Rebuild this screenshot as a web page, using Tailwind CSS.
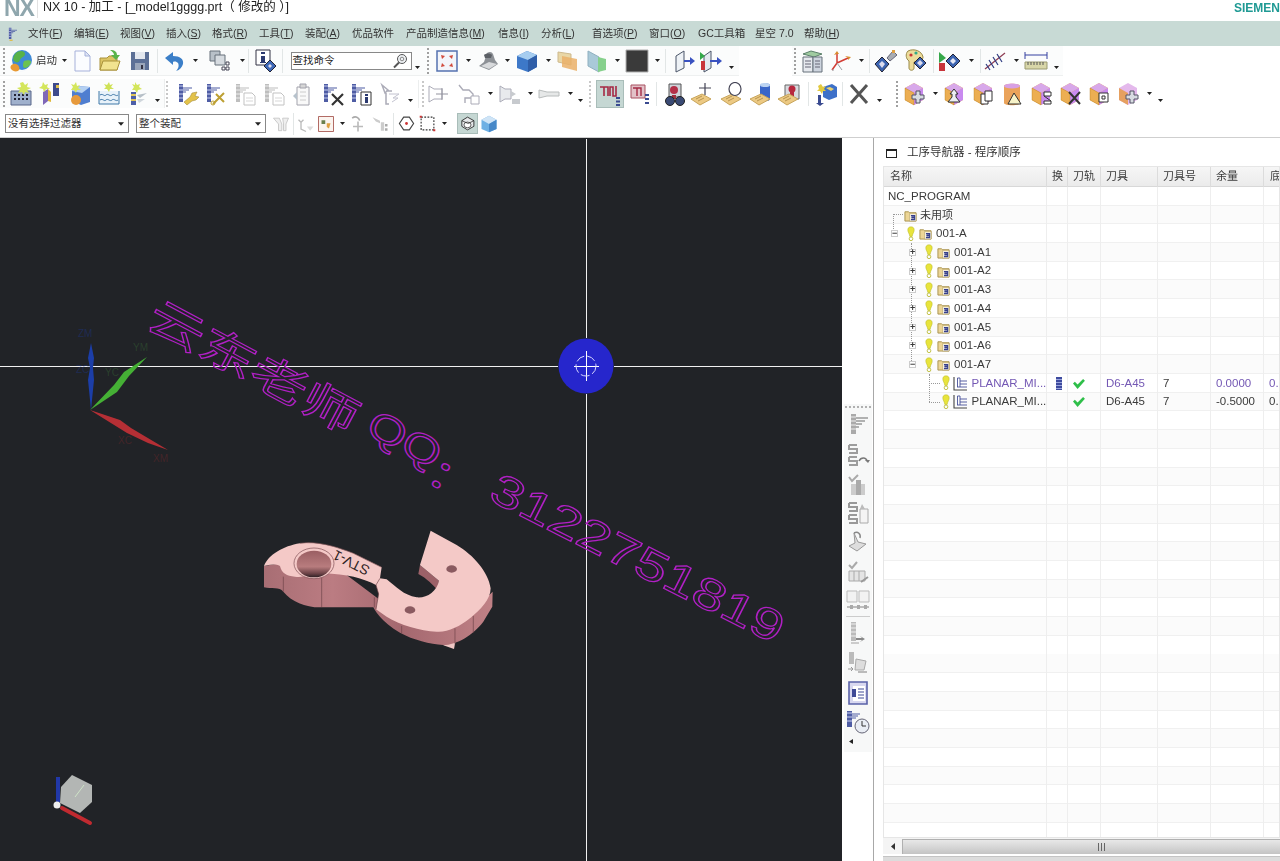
<!DOCTYPE html>
<html lang="zh-CN">

<head>
    <meta charset="UTF-8">
    <title>NX 10 - 加工</title>
    <script src="https://cdn.jsdelivr.net/npm/@tailwindcss/browser@4"></script>
</head>

<body class="bg-white">
    <!-- icon sprite -->
    <svg class="absolute w-0 h-0">
        <symbol id="ar" viewBox="0 0 5 3"><path d="M0 0h5L2.5 3z" fill="#222"/></symbol>
        <symbol id="globe" viewBox="0 0 24 24"><circle cx="13" cy="11" r="10" fill="#3e8ad6"/><path d="M8 3c4-2 8-1 8 2s-4 3-5 6-4 3-6 1 0-7 3-9z" fill="#58b248"/><path d="M15 12c3-1 7-1 7 1s-3 6-6 6-2-5-1-7z" fill="#6cc24f"/><path d="M2 20c-2-3 2-6 5-5s4 4 3 6-6 2-8-1z" fill="#e89a34"/><path d="M8 22c6 1 12-2 14-8-1 6-7 10-14 8z" fill="#f3f6fb"/></symbol>
        <symbol id="doc" viewBox="0 0 24 24"><path d="M5 2h10l5 5v15H5z" fill="#fbfcff" stroke="#a6b1da"/><path d="M15 2v5h5z" fill="#dfe5f5" stroke="#a6b1da"/></symbol>
        <symbol id="folder" viewBox="0 0 24 24"><path d="M2 9h7l2-2h8v14H2z" fill="#dcc463" stroke="#a9923b"/><path d="M2 21l3-9h17l-3 9z" fill="#f2e38f" stroke="#a9923b"/><path d="M12 1c5 0 7 2 7 5h3l-4 5-5-5h3c0-2-2-4-4-5z" fill="#59b449"/></symbol>
        <symbol id="floppy" viewBox="0 0 24 24"><path d="M3 3h18v18H3z" fill="#5c7096"/><path d="M7 3h10v7H7z" fill="#e4e8ef"/><path d="M7 14h10v7H7z" fill="#9aa6ba"/><path d="M13 16h2v4h-2z" fill="#334"/></symbol>
        <symbol id="undo" viewBox="0 0 24 24"><path d="M3 9l8-6v4c7 0 11 3 10 8-1 3-3 6-7 7 3-3 3-6 2-8-1-1-3-2-5-1v3z" fill="#3c7fc8"/></symbol>
        <symbol id="wins" viewBox="0 0 24 24"><path d="M2 2h10v10H2z" fill="#b8c0c8" stroke="#66707a"/><path d="M7 6h10v10H7z" fill="#d6dbe0" stroke="#66707a"/><path d="M18 13h3v3h-3zM18 18h3v3h-3zM14 18h3v3h-3z" fill="#fff" stroke="#445"/></symbol>
        <symbol id="info" viewBox="0 0 24 24"><path d="M3 1h14v15H3z" fill="#fff" stroke="#334"/><path d="M8 3h4v2H8zM8 7h4v6h1v1H7v-1h1z" fill="#2c3a70"/><path d="M17 11l6 6-6 6-6-6z" fill="#3e68b8" stroke="#223"/><path d="M17 15l2 2-2 2-2-2z" fill="#dde"/></symbol>
        <symbol id="fit" viewBox="0 0 24 24"><path d="M2 2h20v20H2z" fill="#f3f5fa" stroke="#5572b0" stroke-width="1.5"/><path d="M6 6l4 1-3 3zM18 6l-1 4-3-3zM6 18l1-4 3 3zM18 18l-4-1 3-3z" fill="#d14b3d"/></symbol>
        <symbol id="shade" viewBox="0 0 24 24"><path d="M3 17l5-4 3-9c3-2 5-1 6 1l2 6 3 4-9 6z" fill="#8d9196"/><path d="M5 17l8-4 8 2-8 5z" fill="#d8dadc"/><path d="M8 6c2-2 6-2 8 0l-1 3H9z" fill="#5c6066"/></symbol>
        <symbol id="cube" viewBox="0 0 24 24"><path d="M12 2l10 4v12l-9 5-11-4V7z" fill="#3d78c8"/><path d="M2 7l11 4 9-5-10-4z" fill="#a6cdf0"/><path d="M13 11v12l9-5V6z" fill="#2f5ea8"/></symbol>
        <symbol id="orng" viewBox="0 0 24 24"><path d="M3 3l13 2v11L3 13z" fill="#e9d7a6" stroke="#cdb98d"/><path d="M7 7l15 3v12L7 18z" fill="#eab068" fill-opacity=".85"/></symbol>
        <symbol id="grnp" viewBox="0 0 24 24"><path d="M3 2l11 6v15L3 17z" fill="#a9c9d8" stroke="#8fb0c0"/><path d="M13 8l8 2v11l-8 2z" fill="#86d08c"/></symbol>
        <symbol id="blk" viewBox="0 0 24 24"><path d="M1 1h22v22H1z" fill="#3a3a3a" stroke="#b0b0b0"/></symbol>
        <symbol id="planeA" viewBox="0 0 24 24"><path d="M4 7l8-5v17l-8 4z" fill="#eef2f6" stroke="#4a5568"/><path d="M12 11h6V8l5 4-5 4v-3h-6z" fill="#3a52c0"/></symbol>
        <symbol id="planeB" viewBox="0 0 24 24"><path d="M5 7l7-5v17l-7 4z" fill="#e3e9f0" stroke="#4a5568"/><path d="M1 3l5 4-5 4z" fill="#33a84a"/><path d="M2 12h4v9H2z" fill="#c8343a"/><path d="M11 11h7V8l5 4-5 4v-3h-7z" fill="#3a52c0"/></symbol>
        <symbol id="stack" viewBox="0 0 24 24"><path d="M3 5l8-3 11 3-8 3z" fill="#9fcba0" stroke="#5a7f6a"/><path d="M3 8h10v15H3z" fill="#e6e9ee" stroke="#66707a"/><path d="M13 8h9v15h-9z" fill="#cdd4de" stroke="#66707a"/><path d="M5 12h6M5 15h6M5 18h6M15 12h5M15 15h5M15 18h5" stroke="#667"/></symbol>
        <symbol id="csys" viewBox="0 0 24 24"><path d="M8 14V5M8 14l11-5M8 14l-5 7" stroke="#d23c34" stroke-width="1.5" fill="none"/><path d="M8 5l-3 1 3-4 2 3zM19 9l-3-2 6 1-3 3z" fill="#d88a2c"/><path d="M8 14l5 7M3 21h2" stroke="#9aa0a6" fill="none"/></symbol>
        <symbol id="wrdia" viewBox="0 0 24 24"><path d="M13 9l6-7 4 4-7 6z" fill="#a8acb2" stroke="#667"/><path d="M18 1h3v3h-3z" fill="#e0a040"/><path d="M8 8l7 7-7 8-7-8z" fill="#3c64b0" stroke="#223"/><path d="M8 12l3 3-3 4-3-4z" fill="#dde"/></symbol>
        <symbol id="pal" viewBox="0 0 24 24"><path d="M5 2c6-3 14 0 15 6 0 3-3 4-6 4l-3 1v6c0 3-5 3-5 0v-7C3 10 2 5 5 2z" fill="#eddc9a" stroke="#9a8a4a"/><circle cx="8" cy="6" r="1.6" fill="#c33"/><circle cx="13" cy="4" r="1.6" fill="#3a8"/><path d="M17 8l6 6-6 6-6-6z" fill="#3c64b0" stroke="#223"/><path d="M17 11l3 3-3 3-3-3z" fill="#dde"/></symbol>
        <symbol id="gdia" viewBox="0 0 24 24"><path d="M2 3l7 6-7 5z" fill="#36a84a"/><path d="M2 14h6v8H2z" fill="#c8343a"/><path d="M16 5l7 7-7 7-7-7z" fill="#3c64b0" stroke="#223"/><path d="M16 9l3 3-3 3-3-3z" fill="#e6e8f4"/></symbol>
        <symbol id="ant" viewBox="0 0 24 24"><path d="M2 20L22 4" stroke="#8c3b52" stroke-width="1.3"/><path d="M6 11l5 8M10 8l5 8M14 5l5 8M3 15l4 6" stroke="#2f3c82" stroke-width="1.2"/></symbol>
        <symbol id="rul" viewBox="0 0 24 24"><path d="M1 6h22M1 3v7M23 3v7" stroke="#3440a0"/><path d="M1 13h22v7H1z" fill="#d8d6a8" stroke="#9a9a70"/><path d="M4 13v3M7 13v3M10 13v3M13 13v3M16 13v3M19 13v3" stroke="#555"/></symbol>
        <symbol id="gridstar" viewBox="0 0 24 24"><path d="M2 9h20v14H2z" fill="#9fb0cc" stroke="#58668a"/><path d="M5 12h2v2H5zM9 12h2v2H9zM13 12h2v2h-2zM17 12h2v2h-2zM5 16h2v2H5zM9 16h2v2H9zM13 16h2v2h-2zM17 16h2v2h-2z" fill="#223"/><path d="M14 0l2 3 3-2-1 4 4 1-4 2 2 3-4-1-1 3-2-3-4 1 2-3-3-2 4-1-1-4z" fill="#d4e65c"/></symbol>
        <symbol id="tool" viewBox="0 0 24 24"><path d="M5 10l5-3v12l-5 4z" fill="#7f67b8"/><path d="M10 7l3 3v10l-3-1z" fill="#e0b93c"/><path d="M15 1h6v13h-6z" fill="#3e4a8c"/><path d="M18 3h3v3h-3z" fill="#e0c050"/><path d="M5 0l2 3 3-1-1 3 3 2-4 0-2 3-1-3-4-1 3-2z" fill="#d4e65c"/></symbol>
        <symbol id="cubeo" viewBox="0 0 24 24"><path d="M9 4l13 1v15l-9 3-9-4V9z" fill="#4f7ed0"/><path d="M4 9l10 2 8-6-13-1z" fill="#b4d0f2"/><circle cx="8" cy="18" r="5" fill="#e79a3c"/><path d="M8 0l1 4 3-1-2 3 3 2-4 0-1 3-2-3-3 0 2-3-2-3 3 1z" fill="#d4e65c"/></symbol>
        <symbol id="water" viewBox="0 0 24 24"><path d="M2 9v13h20V9" fill="#e8f2fa" stroke="#3f78a8"/><path d="M3 13c3-2 4 2 6 0s4 2 6 0 4 2 6 0M3 18c3-2 4 2 6 0s4 2 6 0 4 2 6 0" stroke="#3f78a8" fill="none"/><path d="M12 0l1 3 3-1-2 3 3 2-4 0-1 3-2-3-3 0 2-2-2-3 3 1z" fill="#cfe257"/></symbol>
        <symbol id="mill" viewBox="0 0 24 24"><path d="M6 10h5v13H6z" fill="#4d5fa8"/><path d="M6 12h5v2H6zM6 17h5v2H6z" fill="#e0c65a"/><path d="M12 13l10-2-7 5z" fill="#b7c0c8"/><path d="M12 17l8 0-6 4z" fill="#d0d6dc"/><path d="M10 0l2 3 3-1-1 3 3 2-4 1-1 3-2-3-3 0 2-3-2-3 3 1z" fill="#d4e65c"/></symbol>
        <symbol id="steps" viewBox="0 0 24 24"><path d="M3 2h4v18H3z" fill="#4e5ca4"/><path d="M3 4h4M3 8h4M3 12h4M3 16h4" stroke="#c8cff0"/><path d="M7 6h9M7 8h6M7 10h3" stroke="#4e5ca4" stroke-width="1.2"/></symbol>
        <symbol id="opw" viewBox="0 0 24 24"><use href="#steps"/><path d="M8 20l6-5 2-4 5-1-2 4 4 1-3 3-4 1-5 4z" fill="#e3c24a" stroke="#9a8230" stroke-width=".5"/></symbol>
        <symbol id="ops" viewBox="0 0 24 24"><use href="#steps"/><path d="M9 22l11-11M12 12l8 8" stroke="#bda033" stroke-width="2"/><circle cx="9" cy="21" r="2" fill="none" stroke="#bda033"/></symbol>
        <symbol id="opd" viewBox="0 0 24 24"><use href="#steps"/><path d="M11 11h8l3 3v9H11z" fill="#fff" stroke="#667"/><path d="M13 16h7M13 19h7" stroke="#999"/></symbol>
        <symbol id="opc" viewBox="0 0 24 24"><path d="M6 5h12v18H6z" fill="#f5f5f5" stroke="#667"/><path d="M9 2h6v4H9z" fill="#bbb" stroke="#667"/><path d="M9 10h6M9 14h6M9 18h6" stroke="#aaa"/><path d="M2 14l4-4v8z" fill="#89a"/></symbol>
        <symbol id="opx" viewBox="0 0 24 24"><use href="#steps"/><path d="M11 12l11 11M22 12L11 23" stroke="#333" stroke-width="2.2"/></symbol>
        <symbol id="opi" viewBox="0 0 24 24"><use href="#steps"/><path d="M12 10h10v13H12z" fill="#fff" stroke="#333"/><path d="M16 12h3v2h-3zM16 15h3v6h-3z" fill="#2c3a70"/></symbol>
        <symbol id="opg" viewBox="0 0 24 24"><path d="M4 3l6 5-3 3zM8 9h6M8 11v11h3" stroke="#889" fill="none" stroke-width="1.5"/><path d="M11 12h10l-6 4h5l-6 4" stroke="#aab" fill="none"/></symbol>
        <symbol id="path1" viewBox="0 0 24 24"><path d="M2 4l5 3h8v10H7l-5 3z" fill="#fff" stroke="#889"/><path d="M15 6v12M9 12h12" stroke="#667"/></symbol>
        <symbol id="path2" viewBox="0 0 24 24"><path d="M2 3l4 5h6l4 4v4H8v5" fill="none" stroke="#889" stroke-width="1.4"/><path d="M14 14h8v8h-8z" fill="#fff" stroke="#889"/></symbol>
        <symbol id="path3" viewBox="0 0 24 24"><path d="M2 4l5 3h6v10H7l-5 3z" fill="#dfe2e6" stroke="#889"/><path d="M13 9l5 3-5 3zM14 17h8v5h-8z" fill="#b0b4ba"/></symbol>
        <symbol id="path4" viewBox="0 0 24 24"><path d="M2 8l8 2h12v4H10l-8 2z" fill="#e6e8e8" stroke="#b8bcbc"/></symbol>
        <symbol id="seq" viewBox="0 0 24 24"><path d="M2 5h4v9M6 5h4v9M12 14V5h3v9h3V4" stroke="#a52a44" stroke-width="1.6" fill="none"/><path d="M18 15h4v2h-4zM18 18.500h4v2h-4zM18 22h4v2h-4z" fill="#3a4a90"/></symbol>
        <symbol id="redt" viewBox="0 0 24 24"><path d="M3 3h14v13H3z" fill="#e2c2c8" stroke="#a85060"/><path d="M5 6h4v8M9 6h4v8" stroke="#a52a44" fill="none" stroke-width="1.4"/><path d="M17 12h4v2h-4zM17 16h4v2h-4zM17 20h4v2h-4z" fill="#3a4a90"/></symbol>
        <symbol id="bin" viewBox="0 0 24 24"><path d="M7 2h12v13H7z" fill="#d0d4da" stroke="#555"/><circle cx="12" cy="8" r="4" fill="#b43048"/><path d="M10 13h4v4h-4z" fill="#a03040"/><circle cx="8" cy="19" r="4.500" fill="#3a4a74" stroke="#222"/><circle cx="18" cy="19" r="4.500" fill="#3a4a74" stroke="#222"/></symbol>
        <symbol id="tag" viewBox="0 0 24 24"><path d="M1 17l11-5 9 5-11 6z" fill="#ecc983" stroke="#c7a45a"/><path d="M6 17l6-3M8 19l6-3" stroke="#a88540" stroke-width=".8"/></symbol>
        <symbol id="tagp" viewBox="0 0 24 24"><use href="#tag"/><path d="M15 1v12M9 6h12" stroke="#445" stroke-width="1.2"/></symbol>
        <symbol id="tago" viewBox="0 0 24 24"><use href="#tag"/><ellipse cx="15" cy="7" rx="6" ry="6.500" fill="#fff" stroke="#445" stroke-width="1.2"/></symbol>
        <symbol id="tagc" viewBox="0 0 24 24"><path d="M11 3c3-2 10-2 10 0v14c0 3-10 3-10 0z" fill="#3a66c8"/><ellipse cx="16" cy="3" rx="5" ry="2" fill="#bcd4f2"/><use href="#tag"/></symbol>
        <symbol id="tagr" viewBox="0 0 24 24"><path d="M8 3h14v14H8z" fill="#d8dadf" stroke="#666"/><circle cx="15" cy="7" r="3.500" fill="#b8283e"/><path d="M13 10h4v5h-4z" fill="#b8283e"/><use href="#tag"/></symbol>
        <symbol id="arc" viewBox="0 0 24 24"><path d="M9 5l9-3 5 3v10l-8 3-6-3z" fill="#3d70c8"/><path d="M12 6l4-1 4 2-3 2z" fill="#e8d070"/><path d="M7 2l2 3 3-1-2 3 2 2-3 0-1 3-2-3-3 0 2-2-1-3z" fill="#e2c93f"/><path d="M4 13h3v8h3l-4 3-4-3h2z" fill="#3a4a90"/></symbol>
        <symbol id="bigx" viewBox="0 0 24 24"><path d="M4 3l16 18M20 3L4 21" stroke="#555" stroke-width="3"/></symbol>
        <symbol id="cb" viewBox="0 0 24 24"><path d="M12 1l9 5v12l-9 5-9-5V6z" fill="#f0b64e"/><path d="M3 6l9 5 9-5-9-5z" fill="#d8a8ea"/><path d="M12 11v12l9-5V6z" fill="#c98af0"/><path d="M3 6v12l9 5V11z" fill="#ecae52" stroke="#b07a20" stroke-width=".4"/></symbol>
        <symbol id="cmove" viewBox="0 0 24 24"><use href="#cb"/><path d="M14 9h4v4h4v4h-4v4h-4v-4h-4v-4h4z" fill="#d8dce2" stroke="#556"/></symbol>
        <symbol id="cup" viewBox="0 0 24 24"><use href="#cb"/><path d="M12 7l4 5h-2v3l4 5H6l4-5v-3H8z" fill="#eceef2" stroke="#333"/></symbol>
        <symbol id="ccopy" viewBox="0 0 24 24"><use href="#cb"/><path d="M10 12h7v10h-7z" fill="#fff" stroke="#333"/><path d="M14 9h7v10h-7z" fill="#fff" stroke="#333"/></symbol>
        <symbol id="ctri" viewBox="0 0 24 24"><path d="M4 4c0-3 16-3 16 0v17c0 3-16 3-16 0z" fill="#eaa35a"/><ellipse cx="12" cy="4" rx="8" ry="2.500" fill="#d8a0e4"/><path d="M14 11l7 11H8z" fill="#f7f3c8" stroke="#333"/></symbol>
        <symbol id="c2" viewBox="0 0 24 24"><use href="#cb"/><path d="M15 10h7v4h-7zM15 14l7 5M15 19h7v3h-7z" fill="#fff" stroke="#333"/></symbol>
        <symbol id="cx" viewBox="0 0 24 24"><use href="#cb"/><path d="M11 10l11 12M22 10L11 22" stroke="#333" stroke-width="2"/></symbol>
        <symbol id="cbox" viewBox="0 0 24 24"><use href="#cb"/><path d="M12 11h9v9h-9z" fill="#fff" stroke="#333"/><path d="M15 14h3v3h-3z" fill="none" stroke="#333"/></symbol>
        <symbol id="cbulb" viewBox="0 0 24 24"><path d="M12 1l9 5v12l-9 5-9-5V6z" fill="#e4b9ec"/><path d="M12 11v12l-9-5V6z" fill="#e6a060"/><path d="M14 9h4v4h4v4h-4v4h-4v-4h-4v-4h4z" fill="#d8dce2" stroke="#556"/></symbol>
        <symbol id="filt" viewBox="0 0 24 24"><path d="M3 5h7l3 7v8H9v-8zM14 5h7l-3 7v8h-3v-8z" fill="#e8e8e8" stroke="#aaa"/></symbol>
        <symbol id="sf1" viewBox="0 0 24 24"><path d="M3 7l3 3 3-3M6 10v8l6 3" stroke="#bbb" fill="none" stroke-width="1.6"/><path d="M13 15l4 5 4-5z" fill="#ddd"/></symbol>
        <symbol id="sf2" viewBox="0 0 24 24"><path d="M2 2h20v20H2z" fill="#fbf4ef" stroke="#9a3c34"/><path d="M6 7h5v5H6z" fill="#6a7f4c"/><path d="M13 11h5l-2 7-3-2z" fill="#e0a040"/></symbol>
        <symbol id="sf3" viewBox="0 0 24 24"><path d="M5 5c4-3 8-1 9 3" stroke="#aaa" fill="none" stroke-width="2"/><path d="M12 9v12M6 15h12" stroke="#bbb" stroke-width="2"/></symbol>
        <symbol id="sf4" viewBox="0 0 24 24"><path d="M3 4l9 4v3l-5-2zM13 10h4v10h-4z" fill="#ccc"/><path d="M18 12h3v3h-3zM18 17h3v3h-3z" fill="#aaa"/></symbol>
        <symbol id="hex" viewBox="0 0 24 24"><path d="M8 3h8l6 9-6 9H8l-6-9z" fill="#fff" stroke="#444" stroke-width="1.6"/><circle cx="12" cy="12" r="2" fill="#c33"/></symbol>
        <symbol id="dash" viewBox="0 0 24 24"><path d="M3 3h18v18H3z" fill="none" stroke="#333" stroke-width="1.6" stroke-dasharray="2.500 2"/><path d="M1 1h3v3H1zM20 20h3v3h-3z" fill="#c33"/></symbol>
        <symbol id="mshade" viewBox="0 0 24 24"><path d="M4 8l8-5 9 5v8l-9 5-8-5z" fill="#e6e8ea" stroke="#222" stroke-width="1.2"/><ellipse cx="12" cy="14" rx="5" ry="4" fill="#fff" stroke="#222"/><path d="M4 8l9 4 8-4" stroke="#222" fill="none"/></symbol>
        <symbol id="mcube" viewBox="0 0 24 24"><path d="M12 2l9 5v11l-9 4-9-4V7z" fill="#6eb0e4"/><path d="M3 7l9 5 9-5-9-5z" fill="#cfe4f6"/><path d="M12 12v10l9-4V7z" fill="#4788c8"/></symbol>
        <symbol id="v1" viewBox="0 0 24 24"><path d="M5 1h5v20H5z" fill="#aaa"/><path d="M5 4h5M5 8h5M5 12h5M5 16h5" stroke="#eee"/><path d="M10 5h12M10 8h9M10 11h6M10 14h3" stroke="#999" stroke-width="1.3"/></symbol>
        <symbol id="v2" viewBox="0 0 24 24"><path d="M3 2h8M3 2v4h8v4H3M3 14h8M3 14v4h8v4H3" stroke="#777" stroke-width="2" fill="none"/><path d="M13 18c2-4 7-4 8 0" stroke="#444" stroke-width="1.6" fill="none"/><path d="M22 20l-3-3h5z" fill="#444"/></symbol>
        <symbol id="v3" viewBox="0 0 24 24"><path d="M3 4l3 4 6-6" stroke="#aaa" fill="none" stroke-width="2"/><path d="M5 11h14v11H5z" fill="#ccc"/><path d="M10 7h5v15h-5z" fill="#aaa"/></symbol>
        <symbol id="v4" viewBox="0 0 24 24"><path d="M3 2h8M3 2v4h8v4H3M3 14h8M3 14v4h8v4H3" stroke="#999" stroke-width="2" fill="none"/><path d="M14 8h8v14h-8z" fill="#f4f4f4" stroke="#aaa"/><path d="M16 3l3 5h-5z" fill="#bbb"/></symbol>
        <symbol id="v5" viewBox="0 0 24 24"><path d="M8 3l4 9 8 2-9 7-8-5 6-3z" fill="#ddd" stroke="#999"/><path d="M8 3c4-2 7 1 6 5" stroke="#888" fill="none" stroke-width="1.5"/></symbol>
        <symbol id="v6" viewBox="0 0 24 24"><path d="M3 5l3 3 5-6" stroke="#aaa" fill="none" stroke-width="2"/><path d="M3 11h16v10H3z" fill="#e4e4e4" stroke="#aaa"/><path d="M8 11v10M13 11v10" stroke="#aaa"/><path d="M15 22l7-5" stroke="#999" stroke-width="2"/></symbol>
        <symbol id="v7" viewBox="0 0 24 24"><path d="M1 3h10v11H1zM13 3h10v11H13z" fill="#f2f2f2" stroke="#bbb"/><path d="M1 19h22" stroke="#aaa" stroke-width="1.5"/><path d="M4 17h3v4H4zM11 17h3v4h-3zM18 17h3v4h-3z" fill="#aaa"/></symbol>
        <symbol id="v8" viewBox="0 0 24 24"><path d="M5 1h5v19H5z" fill="#bbb"/><path d="M5 3h5M5 7h5M5 11h5M5 15h5" stroke="#eee"/><path d="M10 17h6l-2-2 5 3-5 3 2-2h-6z" fill="#888"/><path d="M5 22h8" stroke="#ccc" stroke-width="2"/></symbol>
        <symbol id="v9" viewBox="0 0 24 24"><path d="M3 1h5v12H3z" fill="#bbb"/><path d="M10 8l10 2-2 9H9z" fill="#ddd" stroke="#aaa"/><path d="M2 18h5l-2-2M7 18l-2 2" stroke="#999" fill="none"/><path d="M12 21h9" stroke="#bbb" stroke-width="2"/></symbol>
        <symbol id="v10" viewBox="0 0 24 24"><path d="M3 1h18v22H3z" fill="#d8d8f0" stroke="#5a62a8" stroke-width="1.6"/><path d="M7 5h12v15H7z" fill="#fff"/><path d="M6 8h4v8H6z" fill="#3f4a96"/><path d="M12 8h6M12 11h6M12 14h6M12 17h6" stroke="#3f4a96"/></symbol>
        <symbol id="v11" viewBox="0 0 24 24"><path d="M1 1h5v16H1z" fill="#4e5ca4"/><path d="M1 3h5M1 7h5M1 11h5" stroke="#c8cff0"/><path d="M6 4h8M6 6h6M6 8h4" stroke="#4e5ca4"/><circle cx="16" cy="16" r="7" fill="#e9edf4" stroke="#667"/><path d="M16 11v5h4" stroke="#333" fill="none"/></symbol>
        <symbol id="bulb" viewBox="0 0 10 20"><path d="M5 1c3 0 4 2 4 4 0 3-2 4-2.500 8h-3C3 9 1 8 1 5c0-2 1-4 4-4z" fill="#e8e43c" stroke="#b4b420" stroke-width=".6"/><circle cx="5" cy="16" r="2.300" fill="none" stroke="#b4b420"/></symbol>
        <symbol id="fold" viewBox="0 0 14 14"><path d="M1 3h4l1 1h7v9H1z" fill="#ecd596" stroke="#a8914c"/><path d="M6 5h7v8H6z" fill="#f8f4e4" stroke="#a8914c" stroke-width=".5"/><path d="M7.500 7h4v1.500h-3v1h3v2h-4" fill="none" stroke="#363f8c" stroke-width="1.200"/></symbol>
        <symbol id="planar" viewBox="0 0 15 15"><path d="M1 1v13h13" fill="none" stroke="#444" stroke-width="1.1"/><path d="M4.500 11V2M4.500 2H7M7 2v9M7 5h7M7 8h7M4 11h10" fill="none" stroke="#454f98" stroke-width=".9"/></symbol>
        <symbol id="chk" viewBox="0 0 14 12"><path d="M1 6l2-2 3 3 6-6 2 2-8 9z" fill="#2fbf4a"/></symbol>
    </svg>

    <div class="w-[1280px] h-[861px] overflow-hidden flex flex-col text-[#333] blur-[0.3px] font-['Liberation_Sans','Noto_Sans_CJK_SC',sans-serif]">
        <!-- title bar -->
        <div class="h-[21px] flex items-start overflow-hidden shrink-0">
            <div class="ml-[4px] text-[23px] leading-[17px] font-bold text-[#8fa6ad] tracking-[-1px]">NX</div>
            <div class="ml-[3px] h-[18px] border-l border-[#e2e2e2]"></div>
            <div class="pl-[5px] text-[12.5px] leading-[15px] text-[#222] whitespace-pre">NX 10 - 加工 - [_model1gggg.prt（ 修改的 ）]</div>
            <div class="ml-auto mt-[1px] -mr-[8px] text-[12px] leading-[14px] font-bold text-[#1f9a94]">SIEMENS</div>
        </div>

        <!-- menu bar -->
        <div class="h-[25px] shrink-0 bg-[#c8dad5] flex items-center text-[10.5px] text-[#333] whitespace-nowrap">
            <svg class="w-[15px] h-[16px] ml-[7px]" viewBox="0 0 24 24"><use href="#steps"/><path d="M4 22h5" stroke="#e0b93c" stroke-width="2"/></svg>
            <span class="ml-[6px] w-[33px]">文件(<u>F</u>)</span>
            <span class="ml-[13px] w-[33px]">编辑(<u>E</u>)</span>
            <span class="ml-[13px] w-[34px]">视图(<u>V</u>)</span>
            <span class="ml-[12px] w-[34px]">插入(<u>S</u>)</span>
            <span class="ml-[12px] w-[34px]">格式(<u>R</u>)</span>
            <span class="ml-[13px] w-[33px]">工具(<u>T</u>)</span>
            <span class="ml-[13px] w-[35px]">装配(<u>A</u>)</span>
            <span class="ml-[12px] w-[42px]">优品软件</span>
            <span class="ml-[12px] w-[79px]">产品制造信息(<u>M</u>)</span>
            <span class="ml-[13px] w-[30px]">信息(<u>I</u>)</span>
            <span class="ml-[13px] w-[33px]">分析(<u>L</u>)</span>
            <span class="ml-[18px] w-[44px]">首选项(<u>P</u>)</span>
            <span class="ml-[13px] w-[34px]">窗口(<u>O</u>)</span>
            <span class="ml-[15px] w-[45px]">GC工具箱</span>
            <span class="ml-[12px] w-[37px]">星空 7.0</span>
            <span class="ml-[12px] w-[37px]">帮助(<u>H</u>)</span>
        </div>

        <!-- toolbar row 1 -->
        <div class="h-[30px] shrink-0 flex items-center bg-white">
            <div class="w-[739px] h-full shrink-0 flex items-center bg-[#fbfcfc] border-b border-[#eef0f0]">
                <i class="w-[2px] h-[26px] ml-[3px] border-l-2 border-dotted border-[#a0a0a0]"></i>
                <svg class="w-6 h-6 ml-[4px]"><use href="#globe"/></svg>
                <span class="ml-[3px] w-[22px] text-[10.5px] text-[#333]">启动</span>
                <svg class="w-[5px] h-[3px] ml-[3.5px]"><use href="#ar"/></svg>
                <svg class="w-6 h-6 ml-[3.5px]"><use href="#doc"/></svg>
                <svg class="w-6 h-6 ml-[4px]"><use href="#folder"/></svg>
                <svg class="w-6 h-6 ml-[6px]"><use href="#floppy"/></svg>
                <i class="w-px h-[24px] ml-[5px] bg-[#e2e6e6]"></i>
                <svg class="w-6 h-6 ml-[4px]"><use href="#undo"/></svg>
                <svg class="w-[5px] h-[3px] ml-[6.5px]"><use href="#ar"/></svg>
                <svg class="w-6 h-6 ml-[10.5px]"><use href="#wins"/></svg>
                <svg class="w-[5px] h-[3px] ml-[7.5px]"><use href="#ar"/></svg>
                <i class="w-px h-[24px] ml-[3.5px] bg-[#e2e6e6]"></i>
                <svg class="w-6 h-6 ml-[3.5px]"><use href="#info"/></svg>
                <i class="w-px h-[24px] ml-[5px] bg-[#e2e6e6]"></i>
                <div class="ml-[8px] w-[121px] h-[18px] shrink-0 bg-white border border-[#888] flex items-center pl-[1px] pr-[3px] text-[10.5px] text-[#222]">
                    <span>查找命令</span>
                    <svg class="w-[16px] h-[16px] ml-auto" viewBox="0 0 16 16"><circle cx="10" cy="6" r="4.500" fill="#eef1f4" stroke="#555"/><circle cx="10" cy="6" r="1.800" fill="none" stroke="#888"/><path d="M7 9.500l-5 5" stroke="#555" stroke-width="2"/></svg>
                </div>
                <svg class="w-[5px] h-[3px] ml-[3px] translate-y-[7px]"><use href="#ar"/></svg>
                <i class="w-[2px] h-[26px] ml-[7px] border-l-2 border-dotted border-[#a0a0a0]"></i>
                <svg class="w-6 h-6 ml-[6px]"><use href="#fit"/></svg>
                <svg class="w-[5px] h-[3px] ml-[7px]"><use href="#ar"/></svg>
                <svg class="w-6 h-6 ml-[5px]"><use href="#shade"/></svg>
                <svg class="w-[5px] h-[3px] ml-[5.5px]"><use href="#ar"/></svg>
                <svg class="w-6 h-6 ml-[4.5px]"><use href="#cube"/></svg>
                <svg class="w-[5px] h-[3px] ml-[7.5px]"><use href="#ar"/></svg>
                <svg class="w-6 h-6 ml-[3.5px]"><use href="#orng"/></svg>
                <svg class="w-6 h-6 ml-[6px]"><use href="#grnp"/></svg>
                <svg class="w-[5px] h-[3px] ml-[6px]"><use href="#ar"/></svg>
                <svg class="w-6 h-6 ml-[5px]"><use href="#blk"/></svg>
                <svg class="w-[5px] h-[3px] ml-[6.5px]"><use href="#ar"/></svg>
                <i class="w-px h-[24px] ml-[5px] bg-[#e2e6e6]"></i>
                <svg class="w-6 h-6 ml-[5.5px]"><use href="#planeA"/></svg>
                <svg class="w-6 h-6 ml-[3px]"><use href="#planeB"/></svg>
                <svg class="w-[5px] h-[3px] ml-[6.5px] translate-y-[7px]"><use href="#ar"/></svg>
            </div>
            <div class="w-[271px] h-full shrink-0 ml-[53px] flex items-center bg-[#fbfcfc] border-b border-[#eef0f0]">
                <i class="w-[2px] h-[26px] ml-[1.5px] border-l-2 border-dotted border-[#a0a0a0]"></i>
                <svg class="w-6 h-6 ml-[4px]"><use href="#stack"/></svg>
                <svg class="w-6 h-6 ml-[5px]"><use href="#csys"/></svg>
                <svg class="w-[5px] h-[3px] ml-[6.5px]"><use href="#ar"/></svg>
                <i class="w-px h-[24px] ml-[5px] bg-[#e2e6e6]"></i>
                <svg class="w-6 h-6 ml-[4px]"><use href="#wrdia"/></svg>
                <svg class="w-6 h-6 ml-[4.5px]"><use href="#pal"/></svg>
                <i class="w-px h-[24px] ml-[6px] bg-[#e2e6e6]"></i>
                <svg class="w-6 h-6 ml-[3px]"><use href="#gdia"/></svg>
                <svg class="w-[5px] h-[3px] ml-[8px]"><use href="#ar"/></svg>
                <i class="w-px h-[24px] ml-[6px] bg-[#e2e6e6]"></i>
                <svg class="w-6 h-6 ml-[2px]"><use href="#ant"/></svg>
                <svg class="w-[5px] h-[3px] ml-[7.5px]"><use href="#ar"/></svg>
                <svg class="w-6 h-6 ml-[4.5px]"><use href="#rul"/></svg>
                <svg class="w-[5px] h-[3px] ml-[6px] translate-y-[7px]"><use href="#ar"/></svg>
            </div>
        </div>

        <!-- toolbar row 2 -->
        <div class="h-[29px] mt-[3px] shrink-0 flex items-center">
            <div class="w-[165px] h-full shrink-0 flex items-center bg-[#fbfcfc] border-r border-[#eceeee]">
                <i class="w-[2px] h-[26px] ml-[3px] border-l-2 border-dotted border-[#a0a0a0]"></i>
                <svg class="w-6 h-6 ml-[4px]"><use href="#gridstar"/></svg>
                <svg class="w-6 h-6 ml-[5px]"><use href="#tool"/></svg>
                <svg class="w-6 h-6 ml-[5.5px]"><use href="#cubeo"/></svg>
                <svg class="w-6 h-6 ml-[5.5px]"><use href="#water"/></svg>
                <svg class="w-6 h-6 ml-[4px]"><use href="#mill"/></svg>
                <svg class="w-[5px] h-[3px] ml-[5.5px] translate-y-[7px]"><use href="#ar"/></svg>
            </div>
            <i class="w-[2px] h-[26px] ml-[0.5px] border-l-2 border-dotted border-[#c8c8c8]"></i>
            <svg class="w-6 h-6 ml-[8.5px]"><use href="#opw"/></svg>
            <svg class="w-6 h-6 ml-[4px]"><use href="#ops"/></svg>
            <svg class="w-6 h-6 ml-[5px] opacity-40 grayscale"><use href="#opd"/></svg>
            <svg class="w-6 h-6 ml-[5px] opacity-40 grayscale"><use href="#opd"/></svg>
            <svg class="w-6 h-6 ml-[5px] opacity-60"><use href="#opc"/></svg>
            <svg class="w-6 h-6 ml-[5.5px]"><use href="#opx"/></svg>
            <svg class="w-6 h-6 ml-[4.5px]"><use href="#opi"/></svg>
            <svg class="w-6 h-6 ml-[5px] opacity-70"><use href="#opg"/></svg>
            <svg class="w-[5px] h-[3px] ml-[5.5px] translate-y-[7px]"><use href="#ar"/></svg>
            <i class="w-px h-[28px] ml-[5px] bg-[#eceeee]"></i>
            <i class="w-[2px] h-[26px] ml-[3px] border-l-2 border-dotted border-[#c8c8c8]"></i>
            <svg class="w-6 h-6 ml-[3.5px] opacity-70"><use href="#path1"/></svg>
            <svg class="w-6 h-6 ml-[6px] opacity-70"><use href="#path2"/></svg>
            <svg class="w-[5px] h-[3px] ml-[6.5px]"><use href="#ar"/></svg>
            <svg class="w-6 h-6 ml-[5.5px] opacity-70"><use href="#path3"/></svg>
            <svg class="w-[5px] h-[3px] ml-[5.5px]"><use href="#ar"/></svg>
            <svg class="w-6 h-6 ml-[4.5px]"><use href="#path4"/></svg>
            <svg class="w-[5px] h-[3px] ml-[6.5px]"><use href="#ar"/></svg>
            <svg class="w-[5px] h-[3px] ml-[5px] translate-y-[7px]"><use href="#ar"/></svg>
            <i class="w-[2px] h-[26px] ml-[6.5px] border-l-2 border-dotted border-[#c8c8c8]"></i>
            <div class="ml-[5px] w-[28px] h-[28px] shrink-0 bg-[#c5d7d3] border border-[#a9bdb9] flex items-center justify-center">
                <svg class="w-6 h-6"><use href="#seq"/></svg>
            </div>
            <svg class="w-6 h-6 ml-[4px]"><use href="#redt"/></svg>
            <i class="w-px h-[24px] ml-[4px] bg-[#e2e6e6]"></i>
            <svg class="w-6 h-6 ml-[4.5px]"><use href="#bin"/></svg>
            <svg class="w-6 h-6 ml-[4.5px]"><use href="#tagp"/></svg>
            <svg class="w-6 h-6 ml-[6px]"><use href="#tago"/></svg>
            <svg class="w-6 h-6 ml-[5px]"><use href="#tagc"/></svg>
            <svg class="w-6 h-6 ml-[4px]"><use href="#tagr"/></svg>
            <i class="w-px h-[24px] ml-[7px] bg-[#e2e6e6]"></i>
            <svg class="w-6 h-6 ml-[4.5px]"><use href="#arc"/></svg>
            <i class="w-px h-[24px] ml-[4.5px] bg-[#e2e6e6]"></i>
            <svg class="w-6 h-6 ml-[4px]"><use href="#bigx"/></svg>
            <svg class="w-[5px] h-[3px] ml-[5.5px] translate-y-[7px]"><use href="#ar"/></svg>
            <i class="w-[2px] h-[26px] ml-[14px] border-l-2 border-dotted border-[#a0a0a0]"></i>
            <svg class="w-6 h-6 ml-[4.5px]"><use href="#cmove"/></svg>
            <svg class="w-[5px] h-[3px] ml-[6.5px]"><use href="#ar"/></svg>
            <svg class="w-6 h-6 ml-[4.5px]"><use href="#cup"/></svg>
            <svg class="w-6 h-6 ml-[5px]"><use href="#ccopy"/></svg>
            <svg class="w-6 h-6 ml-[5px]"><use href="#ctri"/></svg>
            <svg class="w-6 h-6 ml-[5px]"><use href="#c2"/></svg>
            <svg class="w-6 h-6 ml-[5px]"><use href="#cx"/></svg>
            <svg class="w-6 h-6 ml-[5px]"><use href="#cbox"/></svg>
            <svg class="w-6 h-6 ml-[5px]"><use href="#cbulb"/></svg>
            <svg class="w-[5px] h-[3px] ml-[6.5px]"><use href="#ar"/></svg>
            <svg class="w-[5px] h-[3px] ml-[6px] translate-y-[7px]"><use href="#ar"/></svg>
        </div>

        <!-- toolbar row 3 -->
        <div class="h-[30px] shrink-0 flex items-center pt-[2px] text-[10.5px] border-b border-[#cfcfcf]">
            <div class="ml-[5px] w-[124px] h-[19px] shrink-0 bg-white border border-[#888] flex items-center pl-[2px] pr-[4px]">
                <span>没有选择过滤器</span>
                <svg class="w-[6px] h-[4px] ml-auto"><use href="#ar"/></svg>
            </div>
            <div class="ml-[7px] w-[130px] h-[19px] shrink-0 bg-white border border-[#888] flex items-center pl-[2px] pr-[4px]">
                <span>整个装配</span>
                <svg class="w-[6px] h-[4px] ml-auto"><use href="#ar"/></svg>
            </div>
            <svg class="w-5 h-5 ml-[5px] opacity-70"><use href="#filt"/></svg>
            <i class="w-px h-[22px] ml-[2px] bg-[#e2e6e6]"></i>
            <svg class="w-5 h-5 ml-[2px]"><use href="#sf1"/></svg>
            <svg class="w-[18px] h-[18px] ml-[1px]"><use href="#sf2"/></svg>
            <svg class="w-[5px] h-[3px] ml-[5px]"><use href="#ar"/></svg>
            <svg class="w-5 h-5 ml-[3px]"><use href="#sf3"/></svg>
            <svg class="w-5 h-5 ml-[2px]"><use href="#sf4"/></svg>
            <i class="w-px h-[22px] ml-[3px] bg-[#e2e6e6]"></i>
            <svg class="w-[17px] h-[17px] ml-[3.5px]"><use href="#hex"/></svg>
            <svg class="w-[17px] h-[17px] ml-[4.5px]"><use href="#dash"/></svg>
            <svg class="w-[5px] h-[3px] ml-[6px]"><use href="#ar"/></svg>
            <div class="ml-[9.5px] w-[21px] h-[21px] shrink-0 bg-[#c5d7d3] border border-[#a9bdb9] flex items-center justify-center">
                <svg class="w-[17px] h-[17px]"><use href="#mshade"/></svg>
            </div>
            <svg class="w-5 h-5 ml-[1px]"><use href="#mcube"/></svg>
        </div>

        <div class="flex-1 flex min-h-0">
            <!-- graphics window -->
            <svg class="w-[842px] h-full shrink-0 bg-[#212327]" viewBox="0 138 842 723">
                <defs>
                    <linearGradient id="hole" x1="0" y1="0" x2="0" y2="1"><stop offset="0" stop-color="#9a5e62"/><stop offset=".6" stop-color="#b87c7e"/><stop offset=".85" stop-color="#6e4448"/><stop offset="1" stop-color="#2e2024"/></linearGradient>
                    <linearGradient id="side" x1="0" y1="0" x2="1" y2="0"><stop offset="0" stop-color="#a86e74"/><stop offset=".3" stop-color="#bb7c82"/><stop offset=".6" stop-color="#a4686f"/><stop offset="1" stop-color="#c08186"/></linearGradient>
                </defs>
                <!-- work view crosshair -->
                <path d="M0 366.500H558M614 366.500H842M586.500 139V338M586.500 394V861" stroke="#f0f0f0" stroke-width="1"/>
                <circle cx="586" cy="366" r="27.500" fill="#2626cc"/>
                <path d="M586.500 351V381M574 366.500H599" stroke="#fff"/>
                <circle cx="586" cy="366" r="10" fill="none" stroke="#d8d8ff" stroke-dasharray="9 3"/>

                <!-- watermark note -->
                <g fill="none" stroke="#b020c4" stroke-width="1.600">
                    <text transform="translate(144 326) rotate(28) scale(1 .74)" font-size="58">云东老师</text>
                    <text transform="translate(364 433) rotate(28) scale(1 .8)" font-size="50">QQ</text>
                    <text transform="translate(424 481) rotate(28) scale(1 .8)" font-size="50">：</text>
                    <text transform="translate(487 499) rotate(26.800) scale(1 .76)" font-size="58">3122751819</text>
                </g>

                <!-- WCS triad -->
                <path d="M91 410L88 380 90 368 88 358 91 343 94 358 93 368 94 380z" fill="#1c3ea8"/>
                <path d="M90 410L114 385 124 372 147 357 129 376 117 392z" fill="#45b035"/>
                <path d="M90 410L120 420 131 428 168 450 148 443 127 433z" fill="#b52f35"/>
                <g font-size="10" fill-opacity=".35">
                    <text x="78" y="337" fill="#1c3ea8">ZM</text>
                    <text x="76" y="373" fill="#1c3ea8">ZC</text>
                    <text x="133" y="351" fill="#3e7a3a">YM</text>
                    <text x="105" y="376" fill="#3e7a3a">YC</text>
                    <text x="118" y="444" fill="#8a2a2e">XC</text>
                    <text x="153" y="462" fill="#8a2a2e">XM</text>
                </g>

                <!-- part -->
                <g transform="translate(240 510) scale(.3333)">
                    <path d="M610 406L650 376 642 417z" fill="#f0c8c6"/>
                    <path d="M72 168V232C95 238 118 230 130 245 155 275 195 292 240 292H400C415 320 440 345 480 368 520 390 570 402 610 405 650 405 700 375 730 335L757 290 758 245 700 300 600 340 420 270 300 180 120 160z" fill="url(#side)"/>
                    <path d="M540 165L535 192C560 205 580 225 592 240L597 212z" fill="#9c6168"/>
                    <path d="M72 168C85 135 130 108 180 100 230 92 290 110 340 130L425 172 420 205 440 208C470 232 490 255 530 262 560 265 590 245 597 212L540 165 572 62 650 105C700 135 745 185 752 235 752 270 720 300 690 325 660 350 620 368 590 365 540 362 480 345 440 320L408 298 416 252 408 225C370 205 320 192 250 190 215 190 190 205 165 200 140 198 125 190 120 168 105 160 85 165 72 168z" fill="#f4c9c7"/>
                    <path d="M420 205L408 225 416 252 408 298M130 200V245M245 192V291M403 262V292M485 348V370M645 355V403M700 318V368" stroke="#6e4248" stroke-width="2" fill="none"/>
                    <path d="M180 100C230 92 290 110 340 130L425 172" stroke="#8a5a5e" stroke-width="2" fill="none"/>
                    <ellipse cx="222" cy="160" rx="60" ry="46" fill="#f4c9c7" stroke="#7a4a50" stroke-width="2"/>
                    <ellipse cx="222" cy="162" rx="52" ry="40" fill="url(#hole)"/>
                    <ellipse cx="635" cy="177" rx="16" ry="11" fill="#8a5a60"/>
                    <ellipse cx="510" cy="300" rx="16" ry="11" fill="#8a5a60"/>
                    <text transform="translate(392 172) rotate(207)" font-size="42" fill="#2e2224">STV-1</text>
                </g>

                <!-- view triad -->
                <path d="M72 775L92 785V802L80 813 60 803 61 787z" fill="#b3b6b4"/>
                <path d="M75 797L84 785" stroke="#cfe4c8"/>
                <path d="M58 777V802" stroke="#2138a8" stroke-width="4"/>
                <path d="M62 808L90 823" stroke="#c02a30" stroke-width="4" stroke-linecap="round"/>
                <circle cx="57" cy="805" r="3.500" fill="#eee"/>
            </svg>

            <!-- side toolbar strip -->
            <div class="w-[32px] shrink-0 border-r border-[#a8a8a8] h-full pt-[266px] pl-[2px]">
                <div class="w-[28px] h-[348px] flex flex-col items-center bg-[#f7f8f8] pt-[2px]">
                    <i class="w-[26px] h-[2px] border-t-2 border-dotted border-[#b0b0b0]"></i>
                    <svg class="w-6 h-6 mt-[5px]"><use href="#v1"/></svg>
                    <svg class="w-6 h-6 mt-[6px] opacity-70"><use href="#v2"/></svg>
                    <svg class="w-6 h-6 mt-[6px]"><use href="#v3"/></svg>
                    <svg class="w-6 h-6 mt-[4px]"><use href="#v4"/></svg>
                    <svg class="w-6 h-6 mt-[5px]"><use href="#v5"/></svg>
                    <svg class="w-6 h-6 mt-[6px]"><use href="#v6"/></svg>
                    <svg class="w-6 h-6 mt-[4px]"><use href="#v7"/></svg>
                    <i class="w-[24px] h-px mt-[4px] bg-[#ccc]"></i>
                    <svg class="w-6 h-6 mt-[4px]"><use href="#v8"/></svg>
                    <svg class="w-6 h-6 mt-[6px]"><use href="#v9"/></svg>
                    <svg class="w-6 h-6 mt-[6px]"><use href="#v10"/></svg>
                    <svg class="w-6 h-6 mt-[5px]"><use href="#v11"/></svg>
                    <svg class="w-[4px] h-[5px] mt-[5px] -ml-[15px]" viewBox="0 0 4 5"><path d="M4 0v5L0 2.500z" fill="#222"/></svg>
                </div>
            </div>

            <!-- operation navigator -->
            <div class="flex-1 min-w-0 pl-[9px] flex flex-col overflow-hidden">
                <div class="h-[28px] shrink-0 flex items-center pt-[2px] text-[11.5px] text-[#333]">
                    <i class="w-[11px] h-[9px] ml-[3px] border border-[#222] border-t-2"></i>
                    <span class="ml-[10px]">工序导航器 - 程序顺序</span>
                </div>
                <div class="h-[672px] shrink-0 border border-[#e6e6e6] relative text-[11.5px] text-[#3a3a3a] whitespace-nowrap overflow-hidden">
                    <!-- header -->
                    <div class="h-[20px] flex items-center bg-[linear-gradient(#f6f6f6,#ebebeb)] border-b border-[#d8d8d8] text-[11px]">
                        <span class="w-[163px] shrink-0 pl-[6px] border-r border-[#dcdcdc] leading-[21px]">名称</span>
                        <span class="w-[21px] shrink-0 pl-[5px] border-r border-[#dcdcdc] leading-[21px]">换</span>
                        <span class="w-[33px] shrink-0 pl-[5px] border-r border-[#dcdcdc] leading-[21px]">刀轨</span>
                        <span class="w-[57px] shrink-0 pl-[5px] border-r border-[#dcdcdc] leading-[21px]">刀具</span>
                        <span class="w-[53px] shrink-0 pl-[5px] border-r border-[#dcdcdc] leading-[21px]">刀具号</span>
                        <span class="w-[53px] shrink-0 pl-[5px] border-r border-[#dcdcdc] leading-[21px]">余量</span>
                        <span class="shrink-0 pl-[6px] leading-[21px]">底面余量</span>
                    </div>
                    <!-- striped body -->
                    <div class="relative h-[650px] bg-[repeating-linear-gradient(#ffffff_0,#ffffff_17.7px,#f0f0f0_17.7px,#f0f0f0_18.7px,#fbfbfb_18.7px,#fbfbfb_36.4px,#f0f0f0_36.4px,#f0f0f0_37.4px)]">
                        <!-- column rules -->
                        <div class="absolute inset-0 flex pointer-events-none">
                            <i class="w-[163px] border-r border-[#eeeeee]"></i>
                            <i class="w-[21px] border-r border-[#eeeeee]"></i>
                            <i class="w-[33px] border-r border-[#eeeeee]"></i>
                            <i class="w-[57px] border-r border-[#eeeeee]"></i>
                            <i class="w-[53px] border-r border-[#eeeeee]"></i>
                            <i class="w-[53px] border-r border-[#eeeeee]"></i>
                        </div>
                        <!-- tree connectors -->
                        <i class="absolute left-[9px] top-[27px] h-[19px] border-l border-dotted border-[#999]"></i>
                        <i class="absolute left-[9px] top-[27px] w-[10px] border-t border-dotted border-[#999]"></i>
                        <i class="absolute left-[27px] top-[56px] h-[122px] border-l border-dotted border-[#999]"></i>
                        <i class="absolute left-[45px] top-[187px] h-[28px] border-l border-dotted border-[#999]"></i>
                        <i class="absolute left-[45px] top-[196px] w-[11px] border-t border-dotted border-[#999]"></i>
                        <i class="absolute left-[45px] top-[215px] w-[11px] border-t border-dotted border-[#999]"></i>

                        <div class="relative">
                            <div class="h-[18.7px] flex items-center pl-[4px]">NC_PROGRAM</div>
                            <div class="h-[18.7px] flex items-center">
                                <svg class="w-[13px] h-[13px] ml-[20px]"><use href="#fold"/></svg><span class="ml-[3px] text-[11px]">未用项</span>
                            </div>
                            <div class="h-[18.7px] flex items-center">
                                <span class="ml-[7px] w-[7px] h-[7px] border border-[#ccc] bg-white flex items-center justify-center text-[9px] leading-none font-bold">−</span>
                                <svg class="w-[8px] h-[16px] ml-[9px]"><use href="#bulb"/></svg>
                                <svg class="w-[13px] h-[13px] ml-[4px]"><use href="#fold"/></svg><span class="ml-[4px]">001-A</span>
                            </div>
                            <div class="h-[18.7px] flex items-center">
                                <span class="ml-[25px] w-[7px] h-[7px] border border-[#ccc] bg-white flex items-center justify-center text-[9px] leading-none font-bold">+</span>
                                <svg class="w-[8px] h-[16px] ml-[9px]"><use href="#bulb"/></svg>
                                <svg class="w-[13px] h-[13px] ml-[4px]"><use href="#fold"/></svg><span class="ml-[4px]">001-A1</span>
                            </div>
                            <div class="h-[18.7px] flex items-center">
                                <span class="ml-[25px] w-[7px] h-[7px] border border-[#ccc] bg-white flex items-center justify-center text-[9px] leading-none font-bold">+</span>
                                <svg class="w-[8px] h-[16px] ml-[9px]"><use href="#bulb"/></svg>
                                <svg class="w-[13px] h-[13px] ml-[4px]"><use href="#fold"/></svg><span class="ml-[4px]">001-A2</span>
                            </div>
                            <div class="h-[18.7px] flex items-center">
                                <span class="ml-[25px] w-[7px] h-[7px] border border-[#ccc] bg-white flex items-center justify-center text-[9px] leading-none font-bold">+</span>
                                <svg class="w-[8px] h-[16px] ml-[9px]"><use href="#bulb"/></svg>
                                <svg class="w-[13px] h-[13px] ml-[4px]"><use href="#fold"/></svg><span class="ml-[4px]">001-A3</span>
                            </div>
                            <div class="h-[18.7px] flex items-center">
                                <span class="ml-[25px] w-[7px] h-[7px] border border-[#ccc] bg-white flex items-center justify-center text-[9px] leading-none font-bold">+</span>
                                <svg class="w-[8px] h-[16px] ml-[9px]"><use href="#bulb"/></svg>
                                <svg class="w-[13px] h-[13px] ml-[4px]"><use href="#fold"/></svg><span class="ml-[4px]">001-A4</span>
                            </div>
                            <div class="h-[18.7px] flex items-center">
                                <span class="ml-[25px] w-[7px] h-[7px] border border-[#ccc] bg-white flex items-center justify-center text-[9px] leading-none font-bold">+</span>
                                <svg class="w-[8px] h-[16px] ml-[9px]"><use href="#bulb"/></svg>
                                <svg class="w-[13px] h-[13px] ml-[4px]"><use href="#fold"/></svg><span class="ml-[4px]">001-A5</span>
                            </div>
                            <div class="h-[18.7px] flex items-center">
                                <span class="ml-[25px] w-[7px] h-[7px] border border-[#ccc] bg-white flex items-center justify-center text-[9px] leading-none font-bold">+</span>
                                <svg class="w-[8px] h-[16px] ml-[9px]"><use href="#bulb"/></svg>
                                <svg class="w-[13px] h-[13px] ml-[4px]"><use href="#fold"/></svg><span class="ml-[4px]">001-A6</span>
                            </div>
                            <div class="h-[18.7px] flex items-center">
                                <span class="ml-[25px] w-[7px] h-[7px] border border-[#ccc] bg-white flex items-center justify-center text-[9px] leading-none font-bold">−</span>
                                <svg class="w-[8px] h-[16px] ml-[9px]"><use href="#bulb"/></svg>
                                <svg class="w-[13px] h-[13px] ml-[4px]"><use href="#fold"/></svg><span class="ml-[4px]">001-A7</span>
                            </div>
                            <div class="h-[18.7px] flex items-center text-[#7458b4]">
                                <div class="w-[163px] shrink-0 flex items-center">
                                    <svg class="w-[8px] h-[16px] ml-[58px]"><use href="#bulb"/></svg>
                                    <svg class="w-[15px] h-[15px] ml-[3px]"><use href="#planar"/></svg><span class="ml-[3.5px]">PLANAR_MI...</span>
                                </div>
                                <i class="w-[21px] shrink-0 pl-[9px]"><span class="block w-[6px] h-[13px] bg-[repeating-linear-gradient(#3d4a9e_0,#3d4a9e_2px,#9aa4dc_2px,#9aa4dc_3px)]"></span></i>
                                <div class="w-[33px] shrink-0 pl-[4px]"><svg class="w-[13px] h-[11px]"><use href="#chk"/></svg></div>
                                <div class="w-[57px] shrink-0 pl-[5px]">D6-A45</div>
                                <div class="w-[53px] shrink-0 pl-[5px] text-[#3a3a3a]">7</div>
                                <div class="w-[53px] shrink-0 pl-[5px]">0.0000</div>
                                <div class="shrink-0 pl-[5px]">0.0000</div>
                            </div>
                            <div class="h-[18.7px] flex items-center">
                                <div class="w-[163px] shrink-0 flex items-center">
                                    <svg class="w-[8px] h-[16px] ml-[58px]"><use href="#bulb"/></svg>
                                    <svg class="w-[15px] h-[15px] ml-[3px]"><use href="#planar"/></svg><span class="ml-[3.5px]">PLANAR_MI...</span>
                                </div>
                                <i class="w-[21px] shrink-0"></i>
                                <div class="w-[33px] shrink-0 pl-[4px]"><svg class="w-[13px] h-[11px]"><use href="#chk"/></svg></div>
                                <div class="w-[57px] shrink-0 pl-[5px]">D6-A45</div>
                                <div class="w-[53px] shrink-0 pl-[5px]">7</div>
                                <div class="w-[53px] shrink-0 pl-[5px]">-0.5000</div>
                                <div class="shrink-0 pl-[5px]">0.0000</div>
                            </div>
                        </div>
                    </div>
                </div>
                <!-- horizontal scrollbar -->
                <div class="h-[16px] shrink-0 flex items-center bg-[#f4f4f4]">
                    <div class="w-[19px] flex justify-center">
                        <svg class="w-[4px] h-[7px]" viewBox="0 0 4 7"><path d="M4 0v7L0 3.500z" fill="#333"/></svg>
                    </div>
                    <div class="flex-1 h-[15px] bg-[linear-gradient(#e8e8e8,#c4c4c4)] border-t border-l border-[#b0b0b0] flex items-center pr-[174px] justify-end">
                        <i class="w-[8px] h-[8px] bg-[repeating-linear-gradient(90deg,#666_0,#666_1px,transparent_1px,transparent_3px)]"></i>
                    </div>
                </div>
                <div class="h-[5px] mt-[2px] shrink-0 bg-[#dcdcdc] border-t border-[#c4c4c4]"></div>
            </div>
        </div>
    </div>
</body>

</html>
